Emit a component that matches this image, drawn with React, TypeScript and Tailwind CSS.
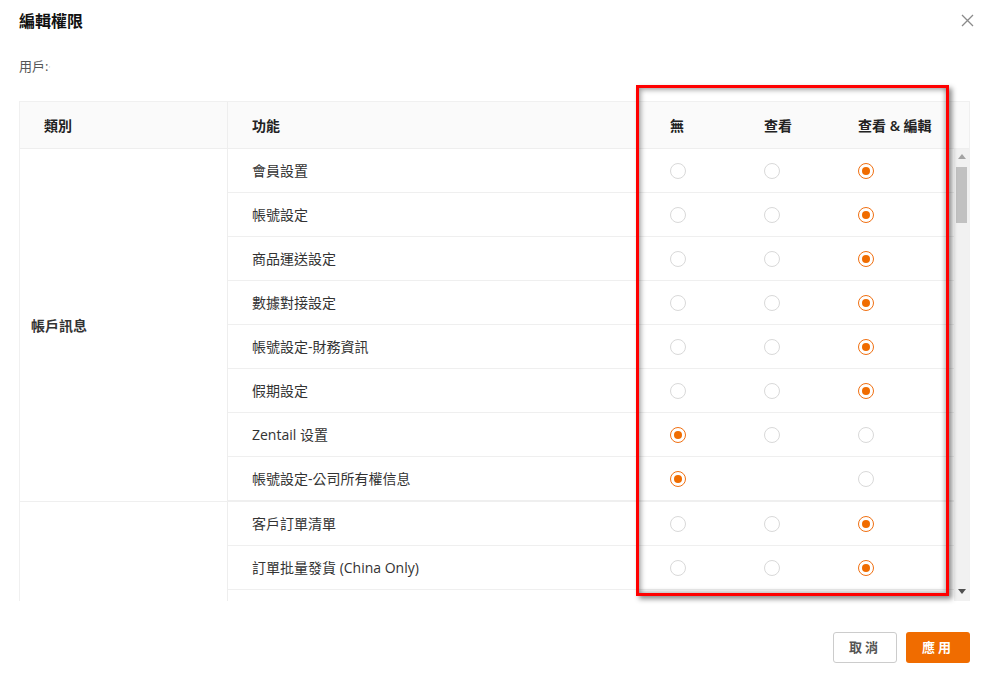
import React from "react";

type Row = { name: string; sel: number; hideView?: boolean };

const group1: Row[] = [
  { name: "會員設置", sel: 2 },
  { name: "帳號設定", sel: 2 },
  { name: "商品運送設定", sel: 2 },
  { name: "數據對接設定", sel: 2 },
  { name: "帳號設定-財務資訊", sel: 2 },
  { name: "假期設定", sel: 2 },
  { name: "Zentail 设置", sel: 0 },
  { name: "帳號設定-公司所有權信息", sel: 0, hideView: true },
];
const group2: Row[] = [
  { name: "客戶訂單清單", sel: 2 },
  { name: "訂單批量發貨 (China Only)", sel: 2 },
  { name: "", sel: -1 },
];

function Radio({ checked }: { checked: boolean }) {
  return checked ? (
    <span className="w-[16px] h-[16px] rounded-full border border-[#f07012] flex items-center justify-center bg-white">
      <span className="w-[8px] h-[8px] rounded-full bg-[#f06c00]" />
    </span>
  ) : (
    <span className="w-[16px] h-[16px] rounded-full border border-[#d9d9d9] bg-white block" />
  );
}

function BodyRow({ r }: { r: Row }) {
  return (
    <div className="flex h-[44px] border-b border-[#efefef] items-center">
      <div className="w-[426px] pl-[24px] text-[14px] text-[#333]">{r.name}</div>
      {r.sel >= 0 && (
        <>
          <div className="w-[94px] pl-[16px] flex">
            <Radio checked={r.sel === 0} />
          </div>
          <div className="w-[94px] pl-[16px] flex">
            {!r.hideView && <Radio checked={r.sel === 1} />}
          </div>
          <div className="flex-1 pl-[16px] flex">
            <Radio checked={r.sel === 2} />
          </div>
        </>
      )}
    </div>
  );
}

export default function App() {
  return (
    <div
      className="w-[991px] h-[675px] bg-white relative overflow-hidden"
      style={{ fontFamily: '"Open Sans", "Noto Sans CJK TC", sans-serif' }}
    >
      <div className="flex items-center justify-between pl-[19px] pr-[17px] pt-[10px] h-[31px]">
        <div className="text-[16px] leading-[20px] font-bold text-[#111]">編輯權限</div>
        <svg width="13" height="13" viewBox="0 0 13 13" className="text-[#8a8a8a]">
          <path d="M1 1L12 12M12 1L1 12" stroke="currentColor" strokeWidth="1.3" />
        </svg>
      </div>
      <div className="pl-[19px] mt-[26px] text-[13px] leading-[18px] text-[#555]">
        用戶:<span className="text-[#ccc] text-[8px]">'</span>
      </div>

      <div className="ml-[19px] mt-[24px] w-[951px] border border-[#f0f0f0] border-b-0">
        <div className="flex h-[47px] bg-[#fafafa] border-b border-[#eeeeee] items-center text-[14px] font-semibold text-[#222]">
          <div className="w-[208px] h-full flex items-center pl-[24px] border-r border-[#eeeeee]">類別</div>
          <div className="w-[426px] pl-[24px]">功能</div>
          <div className="w-[94px] pl-[16px]">無</div>
          <div className="w-[94px] pl-[16px]">查看</div>
          <div className="flex-1 pl-[16px]">查看 &amp; 編輯</div>
        </div>
        <div className="flex h-[452px] overflow-hidden">
          <div className="flex-1 flex flex-col">
            <div className="flex border-b border-[#efefef]">
              <div className="w-[208px] border-r border-[#eeeeee] flex items-center pl-[11px] text-[14px] font-semibold text-[#333]">
                帳戶訊息
              </div>
              <div className="flex-1 flex flex-col">
                {group1.map((r, i) => (
                  <BodyRow key={i} r={r} />
                ))}
              </div>
            </div>
            <div className="flex">
              <div className="w-[208px] border-r border-[#eeeeee]" />
              <div className="flex-1 flex flex-col">
                {group2.map((r, i) => (
                  <BodyRow key={i} r={r} />
                ))}
              </div>
            </div>
          </div>
          <div className="w-[15px] bg-[#f1f1f1] flex flex-col items-center">
            <svg width="8" height="5" viewBox="0 0 8 5" className="mt-[5px]">
              <path d="M0 5L4 0L8 5Z" fill="#a3a3a3" />
            </svg>
            <div className="w-[11px] h-[56px] bg-[#c1c1c1] mt-[8px]" />
            <div className="flex-1" />
            <svg width="8" height="5" viewBox="0 0 8 5" className="mb-[7px]">
              <path d="M0 0L8 0L4 5Z" fill="#505050" />
            </svg>
          </div>
        </div>
      </div>

      <div className="flex justify-end gap-[9px] mr-[21px] mt-[31px]">
        <button className="w-[64px] h-[31px] rounded-[3px] border border-[#cccccc] bg-white text-[13px] font-bold text-[#555] tracking-[3px]">
          取消
        </button>
        <button className="w-[64px] h-[31px] rounded-[3px] bg-[#f06c00] text-[13px] font-bold text-white tracking-[3px]">
          應用
        </button>
      </div>

      <div className="absolute left-[636px] top-[85px] w-[313px] h-[511px] border-[3px] border-[#ff0000] shadow-[3px_3px_5px_rgba(0,0,0,0.45),inset_2px_2px_5px_rgba(0,0,0,0.35),inset_-2px_-2px_4px_rgba(0,0,0,0.2)] pointer-events-none" />
    </div>
  );
}
